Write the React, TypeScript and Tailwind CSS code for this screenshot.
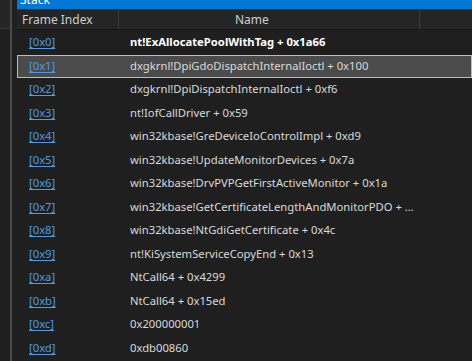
import React from "react";

// Stack frames shown in the debugger window
const frames: { idx: string; name: string }[] = [
  { idx: "[0x0]", name: "nt!ExAllocatePoolWithTag + 0x1a66" },
  { idx: "[0x1]", name: "dxgkrnl!DpiGdoDispatchInternalIoctl + 0x100" },
  { idx: "[0x2]", name: "dxgkrnl!DpiDispatchInternalIoctl + 0xf6" },
  { idx: "[0x3]", name: "nt!IofCallDriver + 0x59" },
  { idx: "[0x4]", name: "win32kbase!GreDeviceIoControlImpl + 0xd9" },
  { idx: "[0x5]", name: "win32kbase!UpdateMonitorDevices + 0x7a" },
  { idx: "[0x6]", name: "win32kbase!DrvPVPGetFirstActiveMonitor + 0x1a" },
  { idx: "[0x7]", name: "win32kbase!GetCertificateLengthAndMonitorPDO + 0x51" },
  { idx: "[0x8]", name: "win32kbase!NtGdiGetCertificate + 0x4c" },
  { idx: "[0x9]", name: "nt!KiSystemServiceCopyEnd + 0x13" },
  { idx: "[0xa]", name: "NtCall64 + 0x4299" },
  { idx: "[0xb]", name: "NtCall64 + 0x15ed" },
  { idx: "[0xc]", name: "0x200000001" },
  { idx: "[0xd]", name: "0xdb00860" },
];

export default function App() {
  return (
    <div
      className="flex h-[361px] w-[472px] overflow-hidden bg-[#1f1f1f] text-[11.25px] text-[#dadada]"
      style={{ fontFamily: '"Segoe UI", "Noto Sans", sans-serif' }}
    >
      {/* left dock strip */}
      <div className="flex w-[17px] shrink-0">
        <div className="flex w-[10px] flex-col">
          <div className="h-[28px] bg-[#252526]" />
          <div className="h-px bg-[#3a3a3a]" />
          <div className="flex-1 bg-[#1f1f1f]" />
        </div>
        <div className="w-[2px] bg-[#4a4a4a]" />
        <div className="w-[5px] bg-[#1f1f1f]" />
      </div>

      <div className="flex min-w-0 flex-1 flex-col">
        {/* title bar */}
        <div className="h-[9px] overflow-hidden bg-[#0078d4]">
          <div className="-mt-[9px] pl-[3px] text-[12px] leading-[18px] text-white">Stack</div>
        </div>
        <div className="h-px bg-[#1b3650]" />

        {/* column header */}
        <div className="flex h-[19px] items-center bg-[#252526] text-[12px] text-[#cfcfcf]">
          <div className="flex h-full w-[101px] items-center pl-[5px]">Frame Index</div>
          <div className="h-full w-px bg-[#3c3c3c]" />
          <div className="flex h-full w-[300px] items-center pl-[116px]">Name</div>
          <div className="h-full w-px bg-[#3c3c3c]" />
        </div>
        <div className="h-px bg-[#161616]" />

        {/* frames */}
        <div className="flex flex-col pt-[1px]">
          {frames.map((f, i) => {
            const selected = i === 1;
            return (
              <div
                key={f.idx}
                className={
                  selected
                    ? "flex h-[23.5px] items-center border border-[#bdbdbd] bg-[#4b4b4b]"
                    : "flex h-[23.5px] items-center border border-transparent"
                }
              >
                <div className="w-[101px] shrink-0 pl-[11px]">
                  <span className="text-[#4d9be6] underline underline-offset-2">{f.idx}</span>
                </div>
                <div
                  className={
                    i === 0
                      ? "w-[295px] overflow-hidden text-ellipsis whitespace-nowrap pl-[11px] font-bold text-white"
                      : "w-[295px] overflow-hidden text-ellipsis whitespace-nowrap pl-[11px]"
                  }
                >
                  {f.name}
                </div>
              </div>
            );
          })}
        </div>
      </div>
    </div>
  );
}
